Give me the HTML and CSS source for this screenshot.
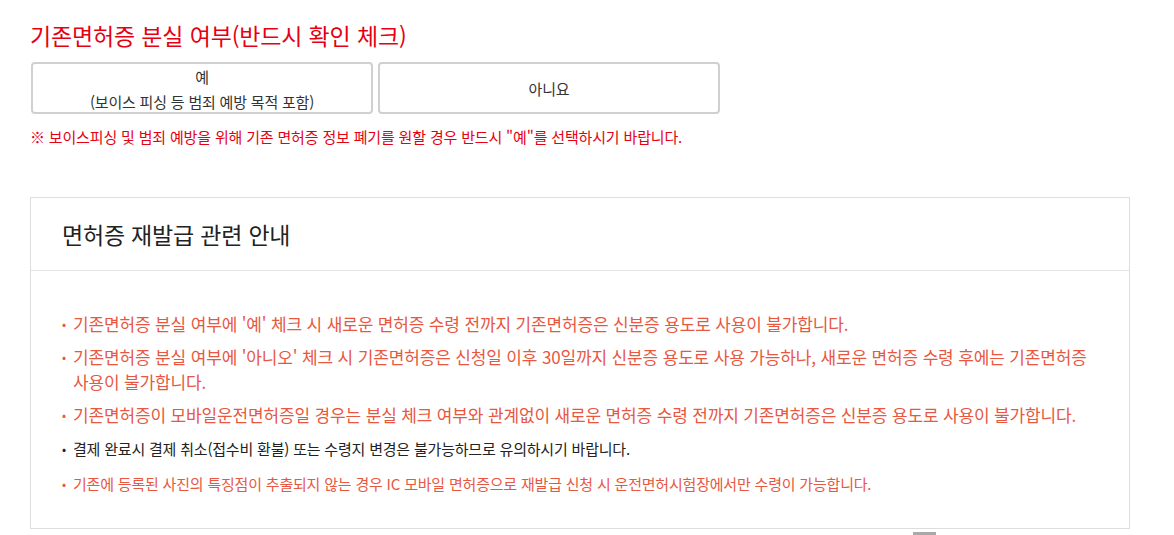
FILE: index.html
```html
<!DOCTYPE html>
<html lang="ko">
<head>
    <meta charset="UTF-8">
    <meta name="viewport" content="width=device-width, initial-scale=1.0">
    <title>면허증 재발급</title>
    <link rel="stylesheet" href="styles.css">
</head>
<body>
    <h2 class="lost-title">기존면허증 분실 여부(반드시 확인 체크)</h2>
    <div class="lost-choice">
        <button type="button" class="choice-btn">예<br>(보이스 피싱 등 범죄 예방 목적 포함)</button>
        <button type="button" class="choice-btn">아니요</button>
    </div>
    <p class="lost-note">※ 보이스피싱 및 범죄 예방을 위해 기존 면허증 정보 폐기를 원할 경우 반드시 "예"를 선택하시기 바랍니다.</p>

    <div class="guide-box">
        <div class="guide-head">면허증 재발급 관련 안내</div>
        <ul class="guide-list">
            <li class="warn">기존면허증 분실 여부에 '예' 체크 시 새로운 면허증 수령 전까지 기존면허증은 신분증 용도로 사용이 불가합니다.</li>
            <li class="warn">기존면허증 분실 여부에 '아니오' 체크 시 기존면허증은 신청일 이후 30일까지 신분증 용도로 사용 가능하나, 새로운 면허증 수령 후에는 기존면허증 사용이 불가합니다.</li>
            <li class="warn">기존면허증이 모바일운전면허증일 경우는 분실 체크 여부와 관계없이 새로운 면허증 수령 전까지 기존면허증은 신분증 용도로 사용이 불가합니다.</li>
            <li class="small">결제 완료시 결제 취소(접수비 환불) 또는 수령지 변경은 불가능하므로 유의하시기 바랍니다.</li>
            <li class="small warn">기존에 등록된 사진의 특징점이 추출되지 않는 경우 IC 모바일 면허증으로 재발급 신청 시 운전면허시험장에서만 수령이 가능합니다.</li>
        </ul>
    </div>

    <a href="#" class="to-top"></a>
</body>
</html>
```

FILE: styles.css
```css
body {
    margin: 0;
    padding: 19px 0 0 30px;
    font-family: "Noto Sans CJK KR", "Noto Sans", sans-serif;
    color: #222;
    background: #fff;
}

.lost-title {
    margin: 0;
    font-size: 23px;
    font-weight: 400;
    line-height: 33px;
    letter-spacing: -0.15px;
    color: #e60012;
}

.lost-choice {
    display: flex;
    gap: 5px;
    margin: 10px 0 0 1px;
}

.choice-btn {
    width: 342px;
    height: 52px;
    padding: 0;
    border: 2px solid #d0d0d0;
    border-radius: 4px;
    background: #fff;
    font-family: inherit;
    font-size: 15px;
    line-height: 25px;
    letter-spacing: -0.2px;
    color: #333;
    cursor: pointer;
}

.lost-note {
    margin: 13px 0 0;
    font-size: 15px;
    line-height: 20px;
    letter-spacing: -0.17px;
    color: #e60012;
}

.guide-box {
    width: 1098px;
    margin-top: 50px;
    border: 1px solid #ddd;
}

.guide-head {
    padding: 21px 31px 20px;
    border-bottom: 1px solid #e5e5e5;
    font-size: 23px;
    line-height: 31px;
    letter-spacing: -0.2px;
    color: #222;
}

.guide-list {
    list-style: none;
    margin: 0;
    padding: 40px 30px 31px 31px;
}

.guide-list li {
    display: flex;
    margin-top: 8px;
    font-size: 17px;
    line-height: 25px;
    letter-spacing: -0.15px;
}

.guide-list li:first-child {
    margin-top: 0;
}

.guide-list li::before {
    content: "•";
    flex: 0 0 11px;
    font-size: 12px;
}

.guide-list li.small {
    font-size: 15px;
    line-height: 27px;
    letter-spacing: -0.2px;
}

.guide-list li.warn {
    color: #e8573f;
}

.to-top {
    position: fixed;
    left: 913px;
    top: 532px;
    width: 23px;
    height: 20px;
    background: #a9a9a9;
}
```
